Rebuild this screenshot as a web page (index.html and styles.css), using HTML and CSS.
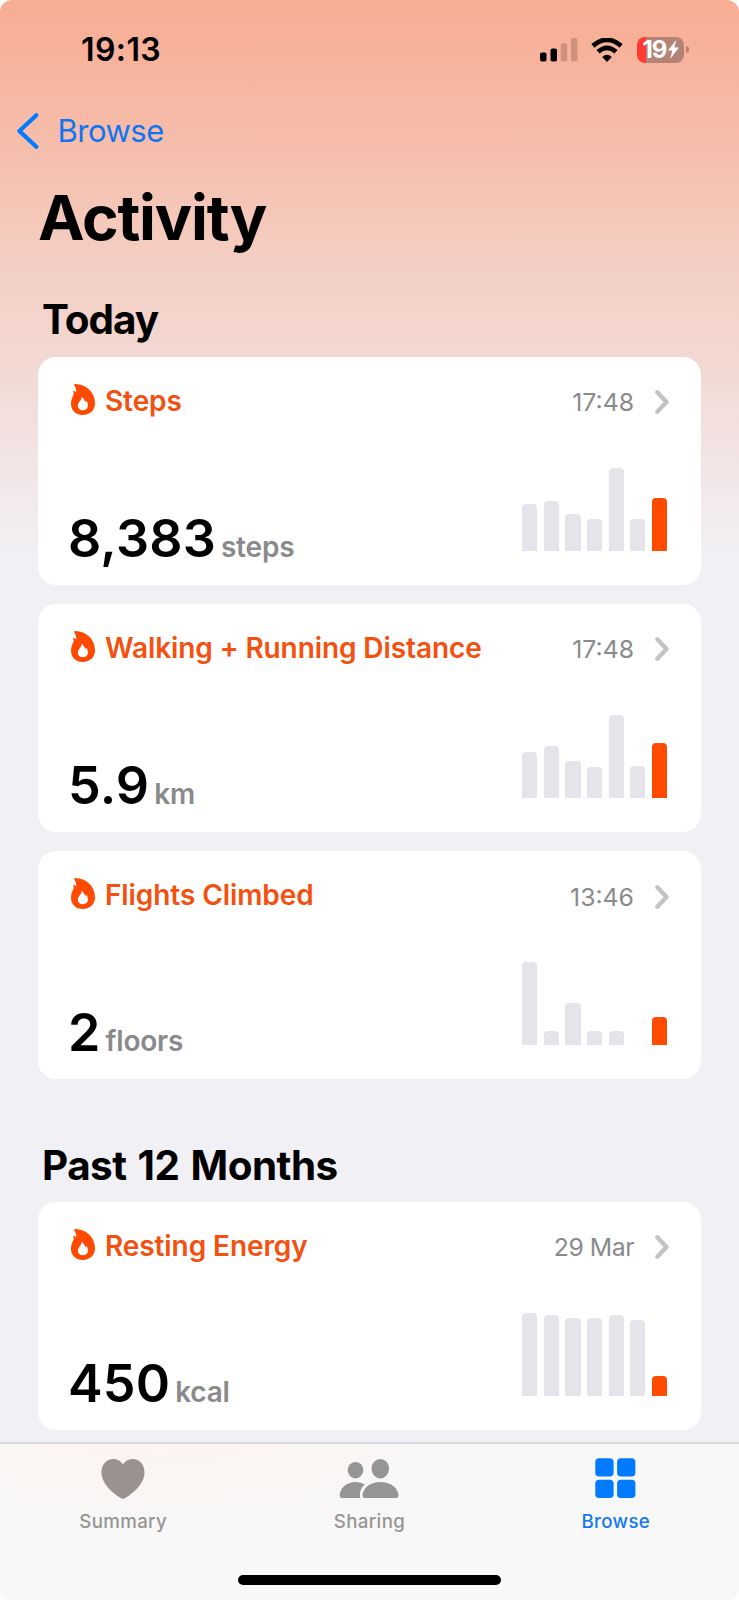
FILE: index.html
```
<!DOCTYPE html>
<html lang="en">
<head>
  <meta charset="UTF-8" />
  <title>Activity</title>
  <link rel="stylesheet" href="styles.css">
</head>
<body>

  <!-- shared icons -->
  <svg class="icon-defs" width="0" height="0">
    <symbol id="flame" viewBox="0 0 24 31">
      <path fill-rule="evenodd" d="M3.2 1.2C3 .5 3.6 0 4.4 0C15 .2 24 8 24 19.3C24 26.3 19 31 11.8 31C4.8 31 0 26.500 0 19.800C0 15.400 1.700 12.400 2.800 10C2.600 9 2.300 8.200 2.200 7.500C2.100 6.700 2.800 6.500 3.300 6.900L5.200 8.600C5.500 6 4.700 3.600 3.200 1.200ZM10.500 13.400C10.800 16.300 6.900 17.800 6.900 21.700C6.900 24.500 8.900 26.200 11.800 26.200C14.900 26.200 16.900 24.300 16.900 21.500C16.900 19.600 16.200 18.100 15.400 17.100C15.100 16.800 14.800 17 14.700 17.300L14.200 18.600C13.900 16.500 12.900 14.600 11.200 13.200C10.800 12.900 10.500 13.100 10.500 13.400Z"/>
    </symbol>
    <symbol id="chevron" viewBox="0 0 14 24">
      <path d="M2.300 2.300L11.500 12L2.300 21.700" fill="none" stroke="currentColor" stroke-width="4.200" stroke-linecap="round" stroke-linejoin="round"/>
    </symbol>
  </svg>

  <div class="screen">

    <div class="status-bar">
      <span class="clock">19:13</span>
      <div class="status-icons">
        <svg class="signal" viewBox="0 0 38 24">
          <rect x="0" y="14.500" width="6.500" height="9" rx="1.800"/>
          <rect x="10.500" y="10.500" width="6.500" height="13" rx="1.800"/>
          <rect class="weak" x="20.700" y="5.200" width="6.500" height="18.300" rx="1.800"/>
          <rect class="weak" x="31" y="0" width="6.500" height="23.500" rx="1.800"/>
        </svg>
        <svg class="wifi" viewBox="0 0 32 24">
          <path d="M1.900 7.900Q16 -4.300 30.100 7.900" fill="none" stroke="#000" stroke-width="4.800"/>
          <path d="M7 13.800Q16 5.800 25 13.800" fill="none" stroke="#000" stroke-width="4.600"/>
          <path d="M11.200 18.900Q16 14.700 20.800 18.900L16 23.900Z"/>
        </svg>
        <div class="battery">
          <div class="battery-body">
            <span>19</span>
            <svg class="bolt" viewBox="0 0 11 19"><path d="M8.200 0L0 10.600H4.300L2.300 18.800L11 7.500H6.500Z"/></svg>
          </div>
          <div class="battery-tip"></div>
        </div>
      </div>
    </div>

    <div class="nav">
      <svg class="back" viewBox="0 0 22 36"><path d="M19.300 2.200L2.400 18L19.300 33.800" fill="none" stroke="currentColor" stroke-width="4.200" stroke-linecap="round" stroke-linejoin="round"/></svg>
      <span>Browse</span>
    </div>

    <div class="content">
      <h1>Activity</h1>

      <h2 class="today">Today</h2>
      <div class="cards">
        <div class="card">
          <div class="card-header">
            <svg class="flame"><use href="#flame"/></svg>
            <span class="name">Steps</span>
            <span class="time">17:48</span>
            <svg class="chevron"><use href="#chevron"/></svg>
          </div>
          <div class="card-body">
            <div class="reading"><span class="value">8,383</span><span class="unit">steps</span></div>
            <div class="chart">
              <i style="height: 47px"></i><i style="height: 50px"></i><i style="height: 37px"></i><i style="height: 32px"></i><i style="height: 83px"></i><i style="height: 32px"></i><i class="now" style="height: 53px"></i>
            </div>
          </div>
        </div>

        <div class="card">
          <div class="card-header">
            <svg class="flame"><use href="#flame"/></svg>
            <span class="name">Walking + Running Distance</span>
            <span class="time">17:48</span>
            <svg class="chevron"><use href="#chevron"/></svg>
          </div>
          <div class="card-body">
            <div class="reading"><span class="value">5.9</span><span class="unit">km</span></div>
            <div class="chart">
              <i style="height: 46px"></i><i style="height: 52px"></i><i style="height: 37px"></i><i style="height: 31px"></i><i style="height: 83px"></i><i style="height: 32px"></i><i class="now" style="height: 55px"></i>
            </div>
          </div>
        </div>

        <div class="card">
          <div class="card-header">
            <svg class="flame"><use href="#flame"/></svg>
            <span class="name">Flights Climbed</span>
            <span class="time">13:46</span>
            <svg class="chevron"><use href="#chevron"/></svg>
          </div>
          <div class="card-body">
            <div class="reading"><span class="value">2</span><span class="unit">floors</span></div>
            <div class="chart">
              <i style="height: 83px"></i><i style="height: 14px"></i><i style="height: 42px"></i><i style="height: 14px"></i><i style="height: 14px"></i><i style="height: 0"></i><i class="now" style="height: 28px"></i>
            </div>
          </div>
        </div>
      </div>

      <h2>Past 12 Months</h2>
      <div class="cards">
        <div class="card">
          <div class="card-header">
            <svg class="flame"><use href="#flame"/></svg>
            <span class="name">Resting Energy</span>
            <span class="time date">29 Mar</span>
            <svg class="chevron"><use href="#chevron"/></svg>
          </div>
          <div class="card-body">
            <div class="reading"><span class="value">450</span><span class="unit">kcal</span></div>
            <div class="chart">
              <i style="height: 83px"></i><i style="height: 81px"></i><i style="height: 78px"></i><i style="height: 78px"></i><i style="height: 81px"></i><i style="height: 76px"></i><i class="now" style="height: 20px"></i>
            </div>
          </div>
        </div>
      </div>
    </div>

    <div class="tab-bar">
      <div class="tabs">
        <div class="tab summary">
          <svg viewBox="0 0 60 40"><path d="M30 40C28.800 40 8.500 28.500 8.500 13.500C8.500 5.500 13.500 0 20.300 0C24.600 0 28.200 2.300 30 5.700C31.800 2.300 35.400 0 39.700 0C46.500 0 51.500 5.500 51.500 13.500C51.500 28.500 31.200 40 30 40Z"/></svg>
          <span>Summary</span>
        </div>
        <div class="tab">
          <svg viewBox="0 0 60 40">
            <ellipse cx="16.500" cy="11.200" rx="7.800" ry="8.300"/>
            <ellipse cx="41.300" cy="9.700" rx="8.800" ry="9.700"/>
            <path d="M3.200 39C1.700 39 .7 38.200 .7 36.500C.7 30 7 23 16.500 23C20 23 23.200 24 25.700 25.600C22.500 28.500 20.800 32.500 20.800 36.300Q20.800 38 21.400 39Z"/>
            <path d="M26.300 39C24.500 39 23.500 38.200 23.500 36.500C23.500 30 30.500 23 41.500 23C52.500 23 59.500 30 59.500 36.500C59.500 38.200 58.500 39 56.700 39Z"/>
          </svg>
          <span>Sharing</span>
        </div>
        <div class="tab active">
          <svg viewBox="0 0 60 40">
            <rect x="9.300" y="-.8" width="18.300" height="18.300" rx="3.800"/>
            <rect x="31.100" y="-.8" width="18.300" height="18.300" rx="3.800"/>
            <rect x="9.300" y="20.800" width="18.300" height="18.300" rx="3.800"/>
            <rect x="31.100" y="20.800" width="18.300" height="18.300" rx="3.800"/>
          </svg>
          <span>Browse</span>
        </div>
      </div>
      <div class="home-indicator"></div>
    </div>

  </div>

</body>
</html>
```
FILE: styles.css
```
* {
  box-sizing: border-box;
}

body {
  margin: 0;
  font-family: Inter, "Liberation Sans", sans-serif;
  background: #fff;
  color: #000;
}

.icon-defs {
  display: none;
}

.screen {
  display: flex;
  flex-direction: column;
  width: 739px;
  height: 1600px;
  overflow: hidden;
  border-radius: 12px;
  background: linear-gradient(#f8ad92 0, #f7b5a0 80px, #f5c0ae 160px, #f4cfc5 270px, #f3d7d0 350px, #f2e4e3 455px, #f1f0f5 555px);
}

/* status bar */
.status-bar {
  display: flex;
  align-items: center;
  justify-content: space-between;
  height: 99px;
  flex: none;
  padding: 0 50px 0 81px;
}

.clock {
  font-size: 32px;
  font-weight: 600;
  letter-spacing: 0.4px;
}

.status-icons {
  display: flex;
  align-items: center;
}

.signal {
  width: 38px;
  height: 24px;
  margin-right: 13px;
}

.signal .weak {
  fill: #cf927d;
}

.wifi {
  width: 32px;
  height: 24px;
  margin-right: 14px;
}

.battery {
  display: flex;
  align-items: center;
  gap: 2px;
}

.battery-body {
  display: flex;
  align-items: center;
  justify-content: center;
  gap: 1px;
  width: 47px;
  height: 26px;
  border-radius: 8px;
  background: linear-gradient(to right, #ff3b30 9px, #b38475 9px);
  color: #fff;
  font-size: 24px;
  font-weight: 700;
  letter-spacing: -0.9px;
}

.bolt {
  width: 11px;
  height: 19px;
  fill: #fff;
}

.battery-tip {
  width: 3px;
  height: 7px;
  border-radius: 0 3px 3px 0;
  background: #bd8573;
}

/* navigation */
.nav {
  display: flex;
  align-items: center;
  gap: 18.500px;
  height: 63px;
  flex: none;
  padding-left: 17px;
  color: #0f75f2;
  font-size: 31px;
  letter-spacing: -0.5px;
}

.back {
  width: 22px;
  height: 36px;
  color: #007aff;
}

.content {
  flex: 1;
  min-height: 0;
  overflow: hidden;
  padding: 18px 38px 0;
}

h1 {
  margin: 0 0 40px;
  font-size: 62.400px;
  line-height: 76px;
  font-weight: 700;
  letter-spacing: -1.200px;
}

h2 {
  margin: 0 0 12px 4px;
  font-size: 40.400px;
  line-height: 48px;
  font-weight: 700;
  letter-spacing: -0.5px;
  word-spacing: 2px;
}

h2.today {
  margin-bottom: 12.700px;
  letter-spacing: -1px;
}

/* cards */
.cards {
  display: flex;
  flex-direction: column;
  gap: 19.200px;
  margin-bottom: 62.700px;
}

.card {
  display: flex;
  flex-direction: column;
  justify-content: space-between;
  height: 228px;
  padding: 28px 32px 20px 33px;
  border-radius: 18px;
  background: #fff;
}

.card-header {
  display: flex;
  align-items: center;
  height: 32px;
}

.flame {
  width: 24px;
  height: 31px;
  margin: -3px 10px 0 0;
  fill: #ff4a00;
}

.name {
  color: #f4500f;
  font-size: 28px;
  font-weight: 600;
  letter-spacing: -0.090px;
}

.time {
  margin: 3px 21px 0 auto;
  color: #8a8a8d;
  font-size: 24.800px;
}

.time.date {
  letter-spacing: -0.5px;
}

.chevron {
  width: 14px;
  height: 24px;
  margin-top: 3px;
  color: #c2c2c4;
}

.card-body {
  display: flex;
  align-items: flex-end;
  justify-content: space-between;
}

.reading {
  display: flex;
  align-items: baseline;
  gap: 5px;
  margin-left: -3px;
}

.value {
  font-size: 52px;
  line-height: 52px;
  font-weight: 600;
  letter-spacing: 0.2px;
}

.unit {
  color: #8a8a8d;
  font-size: 28px;
  font-weight: 600;
  letter-spacing: -0.2px;
}

.chart {
  display: flex;
  align-items: flex-end;
  gap: 6.300px;
  height: 83px;
  margin: 0 2px 14px 0;
}

.chart i {
  width: 15.300px;
  border-radius: 4px 4px 0 0;
  background: #e4e4ea;
}

.chart .now {
  background: #ff4a00;
}

/* bottom tabs */
.tab-bar {
  display: flex;
  flex-direction: column;
  justify-content: space-between;
  align-items: center;
  height: 158px;
  flex: none;
  padding-bottom: 15px;
  border-top: 2px solid #d9d8db;
  background: radial-gradient(ellipse at 22% 0, #fcf5f1 0, #f8f7f7 38%, #f8f8f8 60%);
}

.tabs {
  display: grid;
  grid-template-columns: repeat(3, 1fr);
  width: 100%;
  padding-top: 15px;
}

.tab {
  display: flex;
  flex-direction: column;
  align-items: center;
  gap: 11px;
  color: #959595;
  fill: #959595;
  font-size: 18.700px;
  line-height: 24px;
  font-weight: 500;
  letter-spacing: 0.35px;
}

.tab.summary {
  fill: #9a928f;
}

.tab.active {
  color: #1478f2;
  fill: #007aff;
}

.tab svg {
  width: 60px;
  height: 40px;
  overflow: visible;
}

.home-indicator {
  width: 263px;
  height: 10px;
  border-radius: 5px;
  background: #000;
}
```
